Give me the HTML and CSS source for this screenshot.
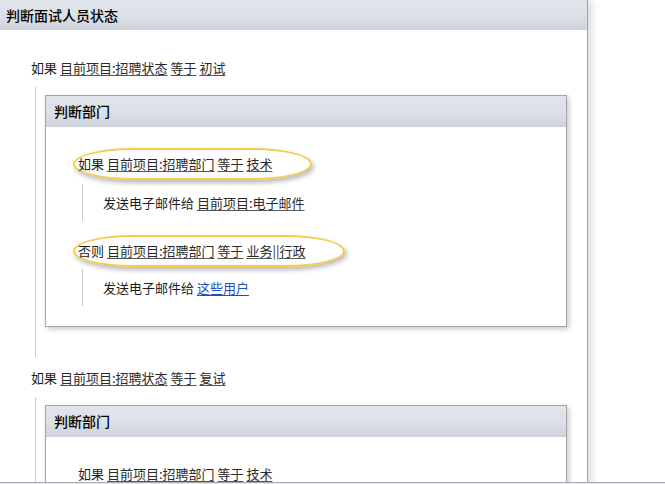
FILE: index.html
```html
<!DOCTYPE html>
<html lang="zh-CN">
<head>
<meta charset="utf-8">
<title>判断面试人员状态</title>
<link rel="stylesheet" href="styles.css">
</head>
<body>
<div class="frame">
  <div class="viewport">
    <div class="panel">
      <div class="panel-header">判断面试人员状态</div>
      <div class="panel-body">

        <div class="rule">
          <div class="cond">如果 <a class="lk">目前项目:招聘状态</a> <a class="lk">等于</a> <a class="lk">初试</a></div>
          <div class="branch">
            <div class="box">
              <div class="box-header">判断部门</div>
              <div class="box-body">
                <div class="hl">如果 <a class="lk">目前项目:招聘部门</a> <a class="lk">等于</a> <a class="lk">技术</a></div>
                <div class="action">发送电子邮件给 <a class="lk">目前项目:电子邮件</a></div>
                <div class="hl hl-else">否则 <a class="lk">目前项目:招聘部门</a> <a class="lk">等于</a> <a class="lk">业务||行政</a></div>
                <div class="action action-else">发送电子邮件给 <a class="lk blue">这些用户</a></div>
              </div>
            </div>
          </div>
        </div>

        <div class="rule">
          <div class="cond">如果 <a class="lk">目前项目:招聘状态</a> <a class="lk">等于</a> <a class="lk">复试</a></div>
          <div class="branch">
            <div class="box">
              <div class="box-header">判断部门</div>
              <div class="box-body">
                <div class="hl plain">如果 <a class="lk">目前项目:招聘部门</a> <a class="lk">等于</a> <a class="lk">技术</a></div>
                <div class="action">发送电子邮件给 <a class="lk">目前项目:电子邮件</a></div>
              </div>
            </div>
          </div>
        </div>

      </div>
    </div>
  </div>
  <div class="hbar"></div>
</div>
</body>
</html>
```

FILE: styles.css
```css
html, body {
  margin: 0;
  padding: 0;
  background: #ffffff;
}

body {
  font-family: "Noto Sans CJK SC", "Microsoft YaHei", sans-serif;
  font-size: 13px;
  line-height: 18px;
  color: #1c1c1c;
}

.frame {
  display: flex;
  flex-direction: column;
  height: 484px;
  overflow: hidden;
}

.viewport {
  flex: 1;
  min-height: 0;
  overflow: hidden;
}

.hbar {
  height: 1px;
  border-top: 1px solid #adadad;
  background: #e4e6ea;
}

.panel {
  width: 587px;
  min-height: 100%;
  border-right: 1px solid #a4a4a4;
  box-shadow: 4px 0 8px rgba(0, 0, 0, 0.14);
  background: #ffffff;
}

.panel-header {
  height: 30px;
  line-height: 30px;
  padding-left: 6px;
  font-size: 14px;
  font-weight: 500;
  color: #000;
  background: linear-gradient(#e0e4eb 0%, #dce0e7 50%, #cfd4dc 100%);
}

.panel-body {
  padding: 29px 20px 0 31px;
}

.cond {
  height: 18px;
  white-space: nowrap;
}

.lk {
  color: #2a2a2a;
  text-decoration: underline;
  text-decoration-color: #555;
  text-underline-offset: 2px;
}

.lk.blue {
  color: #1f4fbf;
  text-decoration-color: #1f4fbf;
}

.branch {
  margin-left: 4px;
  margin-top: 10px;
  border-left: 1px solid #c8c8d6;
  padding: 8px 0 30px 9px;
  margin-bottom: 12px;
}

.box {
  border: 1px solid #a6a6a6;
  box-shadow: 2px 2px 5px rgba(0, 0, 0, 0.22);
  background: #ffffff;
}

.box-header {
  height: 31px;
  line-height: 31px;
  padding-left: 8px;
  font-size: 14px;
  font-weight: 500;
  color: #000;
  background: linear-gradient(#e0e4eb 0%, #dce0e7 50%, #cfd4dc 100%);
}

.box-body {
  padding: 21px 20px 20px 27px;
}

.hl {
  display: inline-block;
  height: 18px;
  padding: 5px 38px 5px 3px;
  border: 2px solid #f7c94c;
  border-radius: 60px / 16px;
  box-shadow: 2px 3px 5px rgba(0, 0, 0, 0.28);
  white-space: nowrap;
}

.hl.plain {
  border-color: transparent;
  box-shadow: none;
}

.hl-else {
  margin-top: 14px;
}

.action {
  margin: 4px 0 0 9px;
  border-left: 1px solid #c8c8d6;
  padding: 10px 0 9px 20px;
  white-space: nowrap;
}

.action-else {
  margin-top: 2px;
}
```
